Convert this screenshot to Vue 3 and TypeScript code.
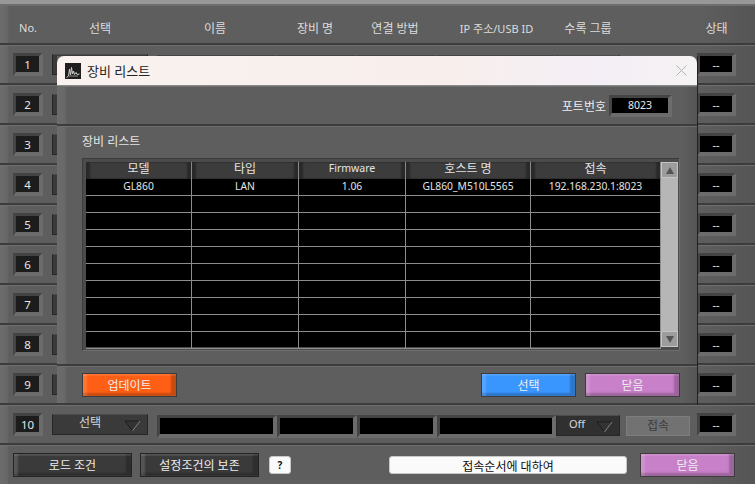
<template>
  <div class="screen">
    <div class="top-strip"></div>

    <div class="band head">
      <span class="c1 latin">No.</span>
      <span class="c2">선택</span>
      <span class="c3">이름</span>
      <span class="c4">장비 명</span>
      <span class="c5">연결 방법</span>
      <span class="c6 latin">IP 주소/USB ID</span>
      <span class="c7">수록 그룹</span>
      <span class="c8"></span>
      <span class="c9">상태</span>
    </div>

    <div v-for="n in 10" :key="n" class="band row">
      <div class="c1 well num">{{ n }}</div>
      <div class="c2 drop">
        <template v-if="n === 10">
          <span class="drop-text sel">선택</span>
          <svg class="tri" width="17" height="12" viewBox="0 0 17 12"><path d="M1 1H16L8.5 11Z" fill="#333" stroke="#1c1c1c" /><path d="M16 1L8.5 11" stroke="#8a8a8a" fill="none" /></svg>
        </template>
      </div>
      <div class="c3 well low"></div>
      <div class="c4 well low"></div>
      <div class="c5 well low"></div>
      <div class="c6 well low"></div>
      <div class="c7 drop off">
        <template v-if="n === 10">
          <span class="drop-text">Off</span>
          <svg class="tri" width="17" height="12" viewBox="0 0 17 12"><path d="M1 1H16L8.5 11Z" fill="#333" stroke="#1c1c1c" /><path d="M16 1L8.5 11" stroke="#8a8a8a" fill="none" /></svg>
        </template>
      </div>
      <div class="c8 connect">{{ n === 10 ? '접속' : '' }}</div>
      <div class="c9 well status">--</div>
    </div>

    <div class="band foot">
      <button class="btn dark load">로드 조건</button>
      <button class="btn dark save">설정조건의 보존</button>
      <button class="pill help">?</button>
      <button class="pill about">접속순서에 대하여</button>
      <button class="btn pink foot-close">닫음</button>
    </div>

    <div class="dialog">
      <div class="titlebar">
        <svg class="app-icon" width="16" height="16" viewBox="0 0 16 16">
          <rect width="16" height="16" fill="#1f1f1f" />
          <path d="M1.5 14.5L3.5 13L4.5 6L5.5 12L6.5 4.5L7.5 11L8.5 8L9.5 11.5L11 9.5L12 11.5L14.5 11" fill="none" stroke="#cfcfcf" stroke-width="1" />
          <path d="M3.5 13H13" stroke="#8a8a8a" stroke-width="1" />
        </svg>
        <span class="title">장비 리스트</span>
        <svg class="close" width="11" height="11" viewBox="0 0 11 11"><path d="M0.5 0.5L10.5 10.5M10.5 0.5L0.5 10.5" stroke="#b4b4b4" stroke-width="1" /></svg>
      </div>

      <div class="sect port">
        <span class="port-label">포트번호</span>
        <div class="well port-box">8023</div>
      </div>

      <div class="sect list">
        <div class="list-title">장비 리스트</div>
        <div class="table-frame">
          <div class="table-main">
            <div class="t-head">
              <div v-for="c in columns" :key="c.label" class="t-th" :class="c.cls">{{ c.label }}</div>
            </div>
            <div v-for="(r, i) in rows" :key="i" class="t-row">
              <div v-for="(c, j) in columns" :key="c.label" class="t-td" :class="c.cls">{{ r[j] }}</div>
            </div>
          </div>
          <div class="scroll">
            <div class="scroll-btn"><span class="arrow up"></span></div>
            <div class="scroll-track"></div>
            <div class="scroll-btn"><span class="arrow down"></span></div>
          </div>
        </div>
      </div>

      <div class="sect actions">
        <button class="btn orange">업데이트</button>
        <span class="spacer"></span>
        <button class="btn blue">선택</button>
        <button class="btn pink">닫음</button>
      </div>
    </div>
  </div>
</template>

<script setup lang="ts">
const columns = [
  { label: '모델', cls: 'w-model' },
  { label: '타입', cls: 'w-type' },
  { label: 'Firmware', cls: 'w-fw' },
  { label: '호스트 명', cls: 'w-host' },
  { label: '접속', cls: 'w-conn' },
];

const rows: string[][] = [
  ['GL860', 'LAN', '1.06', 'GL860_M510L5565', '192.168.230.1:8023'],
  ...Array.from({ length: 9 }, () => ['', '', '', '', '']),
];
</script>

<style>
html,
body {
  margin: 0;
  background: #5c5c5c;
}
</style>

<style scoped>
.screen {
  position: relative;
  width: 755px;
  height: 484px;
  overflow: hidden;
  background: #5c5c5c;
  font-family: "Noto Sans", "Noto Sans CJK KR", sans-serif;
  font-size: 12px;
  color: #e2e2e2;
}

.top-strip {
  height: 5px;
  background: #989898;
  border-bottom: 1px solid #6e6e6e;
  box-sizing: border-box;
}

.band {
  display: flex;
  align-items: center;
  box-sizing: border-box;
  height: 40px;
  padding-left: 13px;
  background: linear-gradient(90deg, #6c6c6c 0, #686868 7px, #5e5e5e 9px, #5e5e5e 700px, #555 755px);
  border-top: 1px solid #6e6e6e;
  border-bottom: 2px solid #3c3c3c;
}

.head {
  color: #dcdcdc;
}

.head span {
  box-sizing: border-box;
  text-align: center;
  position: relative;
  top: 3px;
}

.head .c3,
.head .c4,
.head .c5 {
  padding-right: 4px;
}

.head .latin {
  font-size: 11px;
}

.row {
  color: #e6e6e6;
}

.c1 { width: 30px; flex: none; }
.c2 { width: 96px; margin-left: 9px; flex: none; }
.c3 { width: 120px; margin-left: 9px; flex: none; }
.c4 { width: 80px; flex: none; }
.c5 { width: 80px; flex: none; }
.c6 { width: 119px; flex: none; }
.c7 { width: 64px; flex: none; }
.c8 { width: 64px; margin-left: 6px; flex: none; }
.c9 { width: 39px; margin-left: 7px; flex: none; }

.well {
  box-sizing: border-box;
  height: 23px;
  background: #000;
  border: 3px solid;
  border-width: 3px 4px 4px 3px;
  border-color: #444 #6c6c6c #6c6c6c #444;
  display: flex;
  align-items: center;
  justify-content: center;
  color: #e8e8e8;
  font-size: 11px;
}

.well.low {
  margin-top: 4px;
}

.num {
  background: #1c1c1c;
  font-size: 11.5px;
  padding-top: 1px;
}

.drop {
  position: relative;
  box-sizing: border-box;
  height: 21px;
  background: #3a3a3a;
  border: 1px solid #262626;
  border-top-color: #4b4b4b;
  display: flex;
  color: #d8d8d8;
}

.drop.off {
  background: #303030;
  margin-top: 2px;
  font-size: 11px;
}

.drop-text {
  line-height: 15px;
  padding-left: 12px;
}

.drop-text.sel {
  padding-left: 26px;
}

.tri {
  position: absolute;
  right: 6px;
  bottom: 2px;
}

.connect {
  box-sizing: border-box;
  height: 20px;
  margin-top: 2px;
  background: #727272;
  border: 1px solid #7e7e7e;
  color: #3e3e3e;
  text-align: center;
  line-height: 17px;
}

.foot {
  height: 39px;
  border-bottom: 0;
  padding-left: 13px;
}

.btn {
  box-sizing: border-box;
  width: 95px;
  height: 24px;
  padding: 0;
  font: inherit;
  color: #eee;
  border: 1px solid #3c3c3c;
  box-shadow: inset 4px 0 2px rgba(255, 255, 255, 0.14), inset 0 2px 1px rgba(255, 255, 255, 0.1), inset -5px -3px 2px rgba(0, 0, 0, 0.22);
}

.dark {
  background: #3a3a3a;
  border-color: #242424;
  width: 119px;
}

.save {
  margin-left: 8px;
}

.pill {
  box-sizing: border-box;
  height: 18px;
  padding: 0;
  font: inherit;
  background: #fafafa;
  color: #111;
  border: 1px solid #c8c8c8;
  border-radius: 3px;
}

.help {
  width: 22px;
  margin-left: 10px;
  font-weight: 700;
  font-size: 10px;
}

.about {
  width: 238px;
  margin-left: 98px;
}

.foot-close {
  margin-left: 13px;
}

.orange {
  background: #ff5f14;
}

.blue {
  background: #3a96ff;
}

.pink {
  background: #c880c8;
}

.dialog {
  position: absolute;
  left: 57px;
  top: 56px;
  width: 640px;
  height: 349px;
  display: flex;
  flex-direction: column;
  background: #5e5e5e;
  border-right: 1px solid #222;
}

.titlebar {
  display: flex;
  align-items: center;
  height: 30px;
  flex: none;
  padding: 0 10px 0 8px;
  box-sizing: border-box;
  background: linear-gradient(90deg, #f9f2ee 0, #f8efec 60%, #f4eef6 85%, #f6f3f3 100%);
  border-radius: 7px 7px 0 0;
  border-bottom: 1px solid #8a8a8a;
}

.title {
  margin-left: 6px;
  font-size: 13px;
  color: #222;
}

.close {
  margin-left: auto;
}

.sect {
  box-sizing: border-box;
  background: linear-gradient(90deg, #6c6c6c 0, #686868 8px, #5e5e5e 10px, #5e5e5e 625px, #555 640px);
  border-top: 1px solid #6e6e6e;
  border-bottom: 2px solid #3c3c3c;
}

.port {
  height: 40px;
  display: flex;
  align-items: center;
  justify-content: flex-end;
  padding-right: 25px;
  color: #eee;
}

.port-label {
  margin-right: 3px;
}

.port-box {
  width: 63px;
  height: 22px;
  font-size: 10.5px;
}

.list {
  height: 240px;
  padding: 0 17px 0 25px;
}

.list-title {
  height: 31px;
  line-height: 29px;
  color: #e4e4e4;
}

.table-frame {
  display: flex;
  width: 598px;
  box-sizing: border-box;
  height: 193px;
  padding: 3px;
  border: 1px solid;
  border-color: #3c3c3c #6c6c6c #6c6c6c #3c3c3c;
  background: #4c4c4c;
}

.table-main {
  width: 575px;
  flex: none;
  background: #000;
  font-size: 10.3px;
}

.t-head {
  display: flex;
  height: 17px;
  background: #3c3c3c;
}

.t-th {
  box-sizing: border-box;
  text-align: center;
  line-height: 13px;
  font-size: 12px;
  color: #e4e4e4;
  background: #3c3c3c;
  box-shadow: inset 4px 0 2px rgba(0, 0, 0, 0.3), inset -4px 0 2px rgba(0, 0, 0, 0.3);
  border-right: 1px solid #888;
}

.t-th.w-fw {
  font-size: 10.5px;
}

.t-row {
  display: flex;
  height: 17px;
  box-sizing: border-box;
  border-bottom: 1px solid #8c8c8c;
}

.t-td {
  box-sizing: border-box;
  height: 16px;
  line-height: 14px;
  text-align: center;
  color: #e4e4e4;
  border-right: 1px solid #8c8c8c;
}

.w-model { width: 106px; }
.w-type { width: 107px; }
.w-fw { width: 107px; }
.w-host { width: 125px; }
.w-conn { width: 130px; }

.scroll {
  width: 17px;
  flex: none;
  display: flex;
  flex-direction: column;
  background: #b6b6b6;
}

.scroll-track {
  flex: 1;
}

.scroll-btn {
  height: 16px;
  display: flex;
  align-items: center;
  justify-content: center;
  background: #9c9c9c;
  border: 1px solid #c4c4c4;
  box-sizing: border-box;
}

.arrow {
  width: 0;
  height: 0;
  border-left: 4px solid transparent;
  border-right: 4px solid transparent;
}

.arrow.up {
  border-bottom: 7px solid #555;
}

.arrow.down {
  border-top: 7px solid #555;
}

.actions {
  flex: 1;
  display: flex;
  align-items: center;
  gap: 9px;
  padding: 0 17px 0 25px;
}

.spacer {
  flex: 1;
}
</style>
